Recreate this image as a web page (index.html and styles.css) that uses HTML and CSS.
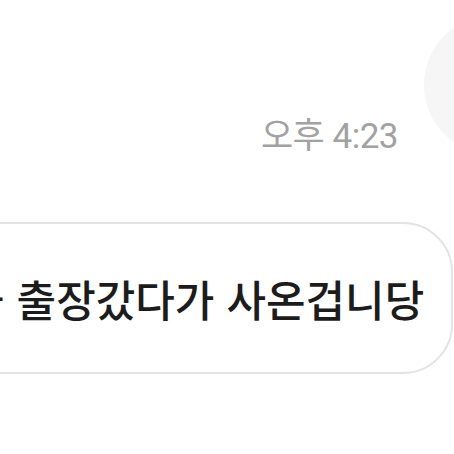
FILE: index.html
```html
<!DOCTYPE html>
<html lang="ko">
<head>
    <meta charset="UTF-8">
    <meta name="viewport" content="width=device-width, initial-scale=1.0">
    <title>채팅</title>
    <link rel="stylesheet" href="styles.css">
</head>
<body>

    <div class="chat">
        <!-- 상대방 프로필 + 보낸 시간 -->
        <div class="meta-row">
            <span class="time">오후 4:23</span>
            <div class="avatar"></div>
        </div>

        <!-- 말풍선 -->
        <div class="bubble">
            <p class="message">을 출장갔다가 사온겁니당</p>
        </div>
    </div>

</body>
</html>
```

FILE: styles.css
```css
* {
    margin: 0;
    padding: 0;
    box-sizing: border-box;
}

html, body {
    width: 454px;
    height: 454px;
    overflow: hidden;
    background-color: #ffffff;
}

body {
    font-family: Roboto, "Noto Sans CJK KR", sans-serif;
}

.chat {
    display: flex;
    flex-direction: column;
    width: 454px;
}

/* 시간 + 프로필 */
.meta-row {
    display: flex;
    justify-content: flex-end;
    align-items: flex-end;
    padding-top: 15px;
    gap: 26px;
}

.time {
    font-size: 35px;
    line-height: 1;
    color: #a2a2a2;
    letter-spacing: -0.5px;
    padding-bottom: 1px;
}

.avatar {
    width: 140px;
    height: 140px;
    border-radius: 50%;
    background-color: #f6f6f6;
    margin-right: -110px;
    flex-shrink: 0;
}

/* 말풍선 */
.bubble {
    margin-top: 67px;
    margin-left: -80px;
    margin-right: 1px;
    height: 152px;
    border: 2px solid #e3e3e3;
    border-radius: 50px;
    display: flex;
    align-items: center;
    padding-left: 43px;
}

.message {
    font-family: "Noto Sans CJK KR", sans-serif;
    font-size: 43px;
    font-weight: 500;
    line-height: 1;
    color: #1c1c1c;
    white-space: nowrap;
}
```
